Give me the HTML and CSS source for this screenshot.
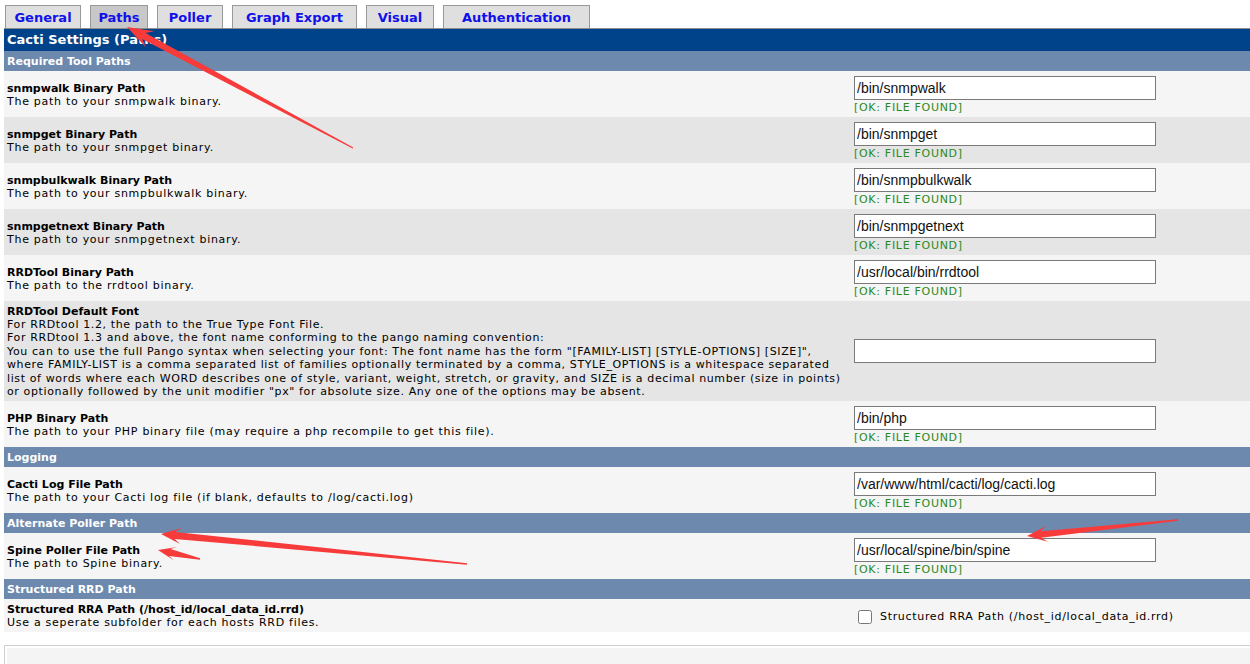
FILE: index.html
```html
<!DOCTYPE html>
<html lang="en">
<head>
  <meta charset="UTF-8" />
  <title>Cacti Settings (Paths)</title>
  <link rel="stylesheet" href="styles.css">
</head>
<body>
  <div class="page">
    <div class="tabs">
      <a class="tab">General</a>
      <a class="tab selected">Paths</a>
      <a class="tab">Poller</a>
      <a class="tab">Graph Export</a>
      <a class="tab">Visual</a>
      <a class="tab">Authentication</a>
    </div>

    <div class="settings">
      <div class="title-bar">Cacti Settings (Paths)</div>

      <div class="section">Required Tool Paths</div>

      <div class="row light">
        <div class="label">
          <div class="name">snmpwalk Binary Path</div>
          <div class="desc">The path to your snmpwalk binary.</div>
        </div>
        <div class="field">
          <input class="text" type="text" value="/bin/snmpwalk" />
          <div class="ok">[OK: FILE FOUND]</div>
        </div>
      </div>

      <div class="row dark">
        <div class="label">
          <div class="name">snmpget Binary Path</div>
          <div class="desc">The path to your snmpget binary.</div>
        </div>
        <div class="field">
          <input class="text" type="text" value="/bin/snmpget" />
          <div class="ok">[OK: FILE FOUND]</div>
        </div>
      </div>

      <div class="row light">
        <div class="label">
          <div class="name">snmpbulkwalk Binary Path</div>
          <div class="desc">The path to your snmpbulkwalk binary.</div>
        </div>
        <div class="field">
          <input class="text" type="text" value="/bin/snmpbulkwalk" />
          <div class="ok">[OK: FILE FOUND]</div>
        </div>
      </div>

      <div class="row dark">
        <div class="label">
          <div class="name">snmpgetnext Binary Path</div>
          <div class="desc">The path to your snmpgetnext binary.</div>
        </div>
        <div class="field">
          <input class="text" type="text" value="/bin/snmpgetnext" />
          <div class="ok">[OK: FILE FOUND]</div>
        </div>
      </div>

      <div class="row light">
        <div class="label">
          <div class="name">RRDTool Binary Path</div>
          <div class="desc">The path to the rrdtool binary.</div>
        </div>
        <div class="field">
          <input class="text" type="text" value="/usr/local/bin/rrdtool" />
          <div class="ok">[OK: FILE FOUND]</div>
        </div>
      </div>

      <div class="row dark">
        <div class="label">
          <div class="name">RRDTool Default Font</div>
          <div class="desc long">For RRDtool 1.2, the path to the True Type Font File.<br>For RRDtool 1.3 and above, the font name conforming to the pango naming convention:<br>You can to use the full Pango syntax when selecting your font: The font name has the form "[FAMILY-LIST] [STYLE-OPTIONS] [SIZE]",<br>where FAMILY-LIST is a comma separated list of families optionally terminated by a comma, STYLE_OPTIONS is a whitespace separated<br>list of words where each WORD describes one of style, variant, weight, stretch, or gravity, and SIZE is a decimal number (size in points)<br>or optionally followed by the unit modifier "px" for absolute size. Any one of the options may be absent.</div>
        </div>
        <div class="field single">
          <input class="text" type="text" value="" />
        </div>
      </div>

      <div class="row light">
        <div class="label">
          <div class="name">PHP Binary Path</div>
          <div class="desc">The path to your PHP binary file (may require a php recompile to get this file).</div>
        </div>
        <div class="field">
          <input class="text" type="text" value="/bin/php" />
          <div class="ok">[OK: FILE FOUND]</div>
        </div>
      </div>

      <div class="section">Logging</div>

      <div class="row light">
        <div class="label">
          <div class="name">Cacti Log File Path</div>
          <div class="desc">The path to your Cacti log file (if blank, defaults to /log/cacti.log)</div>
        </div>
        <div class="field">
          <input class="text" type="text" value="/var/www/html/cacti/log/cacti.log" />
          <div class="ok">[OK: FILE FOUND]</div>
        </div>
      </div>

      <div class="section">Alternate Poller Path</div>

      <div class="row light">
        <div class="label">
          <div class="name">Spine Poller File Path</div>
          <div class="desc">The path to Spine binary.</div>
        </div>
        <div class="field">
          <input class="text" type="text" value="/usr/local/spine/bin/spine" />
          <div class="ok">[OK: FILE FOUND]</div>
        </div>
      </div>

      <div class="section">Structured RRD Path</div>

      <div class="row light">
        <div class="label">
          <div class="name">Structured RRA Path (/host_id/local_data_id.rrd)</div>
          <div class="desc">Use a seperate subfolder for each hosts RRD files.</div>
        </div>
        <div class="field check">
          <label><input type="checkbox" class="box" /> Structured RRA Path (/host_id/local_data_id.rrd)</label>
        </div>
      </div>
    </div>

    <div class="footer-box">
      <div class="footer-inner"></div>
    </div>
  </div>

  <!-- red annotation arrows from the screenshot -->
  <svg class="marks" width="1250" height="664" viewBox="0 0 1250 664">
    <polygon points="127,27 154.2,31.3 145.4,32.9 353.3,147.4 352.7,148.6 142.1,39.1 145.7,47.2" />
    <polygon points="1027,536 1046.1,525.9 1040.6,531.3 1177.9,519.3 1178.1,520.7 1041.3,537.7 1047.7,541.8" />
    <polygon points="161,534 181.7,528 175.3,531.9 467.1,563.3 466.9,564.7 174.6,538.9 180.1,543.9" />
    <polygon points="158,550 177.1,546.9 170.5,549.1 200.2,558.3 199.9,559.7 169,555.9 174.1,560.6" />
  </svg>
</body>
</html>
```

FILE: styles.css
```css
* {
  box-sizing: border-box;
}

body {
  margin: 0;
  background: #ffffff;
  font-family: "DejaVu Sans", Verdana, sans-serif;
  font-size: 11px;
  color: #000;
  overflow: hidden;
}

.page {
  padding-left: 4px;
}

/* tabs */
.tabs {
  display: flex;
  gap: 9px;
  padding: 5px 0 0 1px;
  border-bottom: 1px solid #8c8c8c;
}

.tab {
  display: block;
  height: 23px;
  line-height: 24px;
  text-align: center;
  background: #dfdfdf;
  border: 1px solid #999;
  border-bottom: none;
  color: #1010e8;
  font-weight: bold;
  font-size: 13px;
}

.tab.selected {
  background: #c8c8c8;
}

.tab:nth-child(1) { width: 76px; }
.tab:nth-child(2) { width: 58px; }
.tab:nth-child(3) { width: 66px; }
.tab:nth-child(4) { width: 125px; }
.tab:nth-child(5) { width: 68px; }
.tab:nth-child(6) { width: 147px; }

/* settings table */
.title-bar {
  height: 22px;
  line-height: 22px;
  padding-left: 3px;
  background: #00438a;
  color: #fff;
  font-weight: bold;
  font-size: 13px;
}

.section {
  height: 20px;
  line-height: 22px;
  padding-left: 3px;
  overflow: hidden;
  background: #6d89ae;
  color: #fff;
  font-weight: bold;
}

.row {
  display: grid;
  grid-template-columns: minmax(0, 1fr) 399px;
  align-items: center;
}

.row.light { background: #f5f5f5; }
.row.dark { background: #e5e5e5; }

.label {
  padding: 4px 3px 3px;
  line-height: 13px;
}

.name {
  font-weight: bold;
}

.desc {
  letter-spacing: 0.72px;
}

.desc.long {
  line-height: 13.4px;
  letter-spacing: 0.62px;
  white-space: nowrap;
}

.field {
  padding: 5px 3px 3px;
}

.field.single {
  padding: 3px;
}

.text {
  display: block;
  width: 302px;
  height: 24px;
  margin: 0;
  padding: 0 2px;
  border: 1px solid #7a7a7a;
  background: #fff;
  font-family: "Liberation Sans", Arial, sans-serif;
  font-size: 14px;
  color: #111;
}

.ok {
  padding-top: 1px;
  line-height: 13px;
  color: #2a8a22;
  letter-spacing: 0.7px;
}

.field.check {
  padding: 4px 3px 2px 7px;
}

.field.check label {
  display: flex;
  align-items: center;
  gap: 8px;
  letter-spacing: 0.68px;
}

.box {
  margin: 0;
  width: 14px;
  height: 14px;
}

/* empty box at the bottom */
.footer-box {
  margin-top: 13px;
  border: 1px solid #cfcfcf;
  border-right: none;
  padding: 2px 0 0 2px;
  height: 40px;
}

.footer-inner {
  height: 100%;
  background: #f4f4f4;
}

.marks {
  position: absolute;
  top: 0;
  left: 0;
  pointer-events: none;
}

.marks polygon {
  fill: #f73b3b;
}
```
